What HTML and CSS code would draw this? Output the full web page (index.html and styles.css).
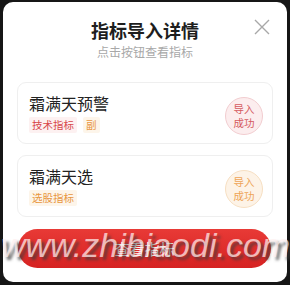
FILE: index.html
```html
<!DOCTYPE html>
<html lang="zh">
<head>
<meta charset="utf-8">
<link rel="stylesheet" href="styles.css">
</head>
<body>
<div class="modal">
  <div class="header">
    <div class="title">指标导入详情</div>
    <div class="subtitle">点击按钮查看指标</div>
  </div>
  <svg class="close" width="16" height="16" viewBox="0 0 16 16"><path d="M1 1L15 15M15 1L1 15" stroke="#a8a8a8" stroke-width="1.4" fill="none"/></svg>
  <div class="list">
    <div class="card">
      <div class="info">
        <div class="name">霜满天预警</div>
        <div class="tags"><span class="tag red">技术指标</span><span class="tag orange">副</span></div>
      </div>
      <div class="badge red-badge"><span>导入</span><span>成功</span></div>
    </div>
    <div class="card">
      <div class="info">
        <div class="name">霜满天选</div>
        <div class="tags"><span class="tag orange">选股指标</span></div>
      </div>
      <div class="badge orange-badge"><span>导入</span><span>成功</span></div>
    </div>
  </div>
  <div class="btn">查看指标</div>
  <div class="watermark">www.zhibiaodi.com</div>
</div>
</body>
</html>
```
FILE: styles.css
```css
html, body { margin: 0; padding: 0; }
body {
  width: 290px; height: 285px; overflow: hidden;
  background: #161616;
  font-family: "Noto Sans CJK SC", "Noto Sans", sans-serif;
}
.modal {
  position: relative;
  margin: 2px 3px 0;
  height: 280px;
  box-sizing: border-box;
  background: #fff;
  border-radius: 10px;
  padding: 18px 14px 0;
  display: flex; flex-direction: column;
}
.header { text-align: center; }
.title { font-size: 18px; line-height: 20px; font-weight: bold; color: #1e1e1e; }
.subtitle { margin-top: 5px; font-size: 12px; line-height: 14px; color: #a8a8a8; }
.close { position: absolute; top: 17px; right: 17px; }
.list { margin-top: 23px; display: flex; flex-direction: column; gap: 11px; }
.card {
  height: 62px; box-sizing: border-box;
  border: 1px solid #efefef; border-radius: 9px;
  padding: 0 9px 0 11px;
  display: flex; align-items: center; justify-content: space-between;
}
.info { display: flex; flex-direction: column; }
.name { font-size: 16px; line-height: 22px; color: #222; margin-top: -2px; }
.tags { display: flex; gap: 6px; margin-top: 3px; }
.tag { font-size: 10.5px; line-height: 16px; padding: 0 3px; border-radius: 2px; }
.tag.red { color: #d8474a; background: #fdf1f1; }
.tag.orange { color: #e8953e; background: #fdf5ea; }
.badge {
  width: 38px; height: 38px; border-radius: 50%; box-sizing: border-box;
  font-size: 10.5px; line-height: 14px; text-align: center;
  display: flex; flex-direction: column; align-items: center; justify-content: center;
  margin-top: 6px;
}
.red-badge { color: #d55a60; background: #fcedee; border: 1px solid #f2cdd0; }
.orange-badge { color: #eea456; background: #fdf3e7; border: 1px solid #f7dfc2; }
.btn {
  margin: 12px 2px 0 1px; height: 39px; border-radius: 20px;
  background: linear-gradient(#e83a36, #d62222);
  color: #fff; font-size: 15px; line-height: 39px; text-align: center;
}
.watermark {
  position: absolute; left: -2px; top: 223px;
  font-family: "Liberation Sans", sans-serif;
  font-style: italic; font-size: 34px; line-height: 40px;
  color: rgba(255, 240, 240, 0.72);
  text-shadow: 3px 3px 3px rgba(60, 60, 60, 0.75);
  white-space: nowrap; pointer-events: none;
}
```
